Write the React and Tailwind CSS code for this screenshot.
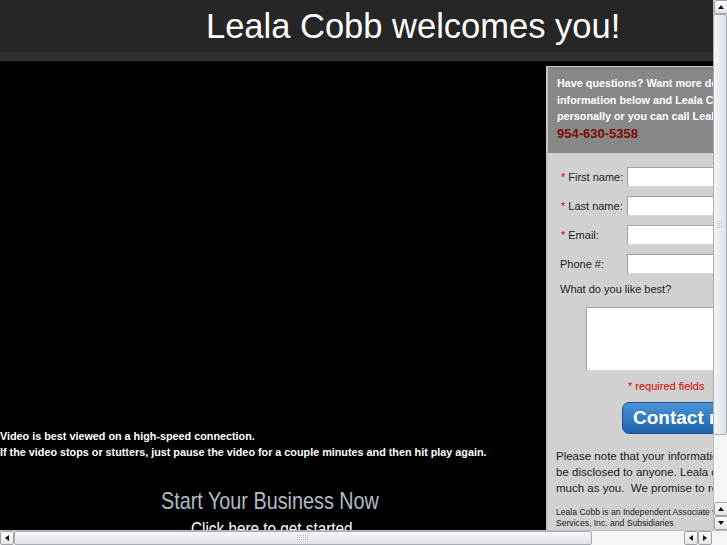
import React from "react";

const sans = { fontFamily: '"Liberation Sans", Arial, sans-serif' };

function Grip({ vertical }) {
  const dots = [];
  const cols = vertical ? 3 : 6;
  const rows = vertical ? 4 : 3;
  for (let r = 0; r < rows; r++)
    for (let c = 0; c < cols; c++)
      dots.push(<rect key={r + "-" + c} x={c * 2} y={r * 2} width="1" height="1" fill="#b8bcc4" />);
  return (
    <svg width={cols * 2} height={rows * 2}>
      {dots}
    </svg>
  );
}

function Arrow({ dir }) {
  const pts = {
    up: "1,5 4,1 7,5",
    down: "1,1 4,5 7,1",
    left: "5,1 1,4 5,7",
    right: "1,1 5,4 1,7",
  }[dir];
  const w = dir === "up" || dir === "down" ? 8 : 6;
  const h = dir === "up" || dir === "down" ? 6 : 8;
  return (
    <div className="w-[14px] h-[14px] flex items-center justify-center rounded-[2px] border border-[#9ea2a8] bg-gradient-to-b from-[#fdfdfd] to-[#e3e5e9]">
      <svg width={w} height={h}>
        <polygon points={pts} fill="#111" />
      </svg>
    </div>
  );
}

export default function App() {
  return (
    <div className="w-[727px] h-[545px] overflow-hidden flex flex-col bg-white" style={sans}>
      <div className="flex h-[530px]">
        {/* page content */}
        <div className="w-[713px] h-[530px] overflow-hidden bg-black flex flex-col">
          <div className="h-[52px] shrink-0 bg-[#262626] flex items-center pl-[206px]">
            <span className="text-[34.5px] leading-none text-white whitespace-nowrap">
              Leala Cobb welcomes you!
            </span>
          </div>
          <div className="h-[9px] shrink-0 bg-[#2f2f2f]" />
          <div className="flex flex-1">
            {/* video column */}
            <div className="w-[546px] shrink-0 flex flex-col pt-[367px]">
              <div className="text-[10.8px] leading-[16px] font-bold text-white whitespace-nowrap">
                <div>Video is best viewed on a high-speed connection.</div>
                <div>If the video stops or stutters, just pause the video for a couple minutes and then hit play again.</div>
              </div>
              <div className="pl-[161px] mt-[27px] h-[28px] text-[24px] leading-[28px] text-[#b3bbc4] whitespace-nowrap">
                <div className="origin-left scale-x-[0.825]">Start Your Business Now</div>
              </div>
              <div className="pl-[191px] mt-[2px] text-[19px] leading-[24px] text-white whitespace-nowrap">
                <div className="origin-left scale-x-[0.805]">Click here to get started</div>
              </div>
            </div>
            {/* contact panel */}
            <div className="mt-[5px] w-[240px] shrink-0 border-l-2 border-t border-[#c4c4c4] bg-[#d1d1d1] flex flex-col">
              <div className="bg-[#878787] pl-[9px] pt-[8px] h-[86px] text-[10.8px] leading-[16.5px] font-bold text-white whitespace-nowrap">
                <div>Have questions? Want more details? Fill out the</div>
                <div>information below and Leala Cobb will contact you</div>
                <div>personally or you can call Leala at</div>
                <div className="text-[13px] text-[#7d0a0a] pt-[1px]">954-630-5358</div>
              </div>
              <div className="pl-[12px] pt-[14px] text-[11px] text-[#222] flex flex-col">
                {[
                  ["First name:", true],
                  ["Last name:", true],
                  ["Email:", true],
                  ["Phone #:", false],
                ].map(([label, req], i) => (
                  <div key={label} className={"flex items-center h-[20px] " + (i > 0 ? "mt-[9px]" : "")}>
                    <div className="w-[68px] whitespace-nowrap">
                      {req ? <span className="text-[#d40000] pl-[1px] pr-[3px]">*</span> : null}
                      {label}
                    </div>
                    <div className="w-[160px] h-[20px] bg-white border border-[#a0a0a0] border-b-[#d8d8d8] border-r-[#d8d8d8]" />
                  </div>
                ))}
                <div className="mt-[8px] leading-[14px] whitespace-nowrap">What do you like best?</div>
                <div className="ml-[26px] mt-[11px] w-[160px] h-[64px] bg-white border border-[#a0a0a0] border-b-[#d8d8d8] border-r-[#d8d8d8]" />
                <div className="ml-[68px] mt-[8px] leading-[14px] text-[#d40000] whitespace-nowrap">* required fields</div>
                <div className="ml-[62px] mt-[9px] w-[130px] h-[32px] rounded-[7px] border border-[#1d4f8a] bg-gradient-to-b from-[#4a95d8] to-[#1e63ad] text-white font-bold text-[19px] leading-[30px] pl-[10px] whitespace-nowrap">
                  Contact me
                </div>
              </div>
              <div className="pl-[8px] pt-[14px] text-[11.5px] leading-[16px] text-[#1a1a1a] whitespace-nowrap">
                <div>Please note that your information will never</div>
                <div>be disclosed to anyone. Leala dislikes spam as</div>
                <div>much as you.&nbsp; We promise to respect your privacy.</div>
              </div>
              <div className="pl-[8px] pt-[11px] text-[8.6px] leading-[11px] text-[#1a1a1a] whitespace-nowrap">
                <div>Leala Cobb is an Independent Associate with Pre-Paid Legal</div>
                <div>Services, Inc. and Subsidiaries</div>
              </div>
            </div>
          </div>
        </div>
        {/* vertical scrollbar */}
        <div className="w-[14px] h-[530px] flex flex-col bg-[#f4f5f7] border-l border-[#b9bcc2]">
          <Arrow dir="up" />
          <div className="h-[421px] w-[14px] -ml-[1px] rounded-[2px] border border-[#a7abb2] bg-gradient-to-r from-[#f3f4f7] to-[#e0e2e7] flex items-center justify-center">
            <Grip vertical />
          </div>
          <div className="flex-1" />
          <Arrow dir="up" />
          <Arrow dir="down" />
        </div>
      </div>
      {/* horizontal scrollbar */}
      <div className="h-[15px] flex bg-[#f4f5f7] border-t border-[#b9bcc2]">
        <Arrow dir="left" />
        <div className="w-[578px] h-[14px] rounded-[2px] border border-[#a7abb2] bg-gradient-to-b from-[#f6f7f9] to-[#e1e3e8] flex items-center justify-center">
          <Grip />
        </div>
        <div className="flex-1" />
        <Arrow dir="left" />
        <Arrow dir="right" />
        <div className="w-[15px]" />
      </div>
    </div>
  );
}
